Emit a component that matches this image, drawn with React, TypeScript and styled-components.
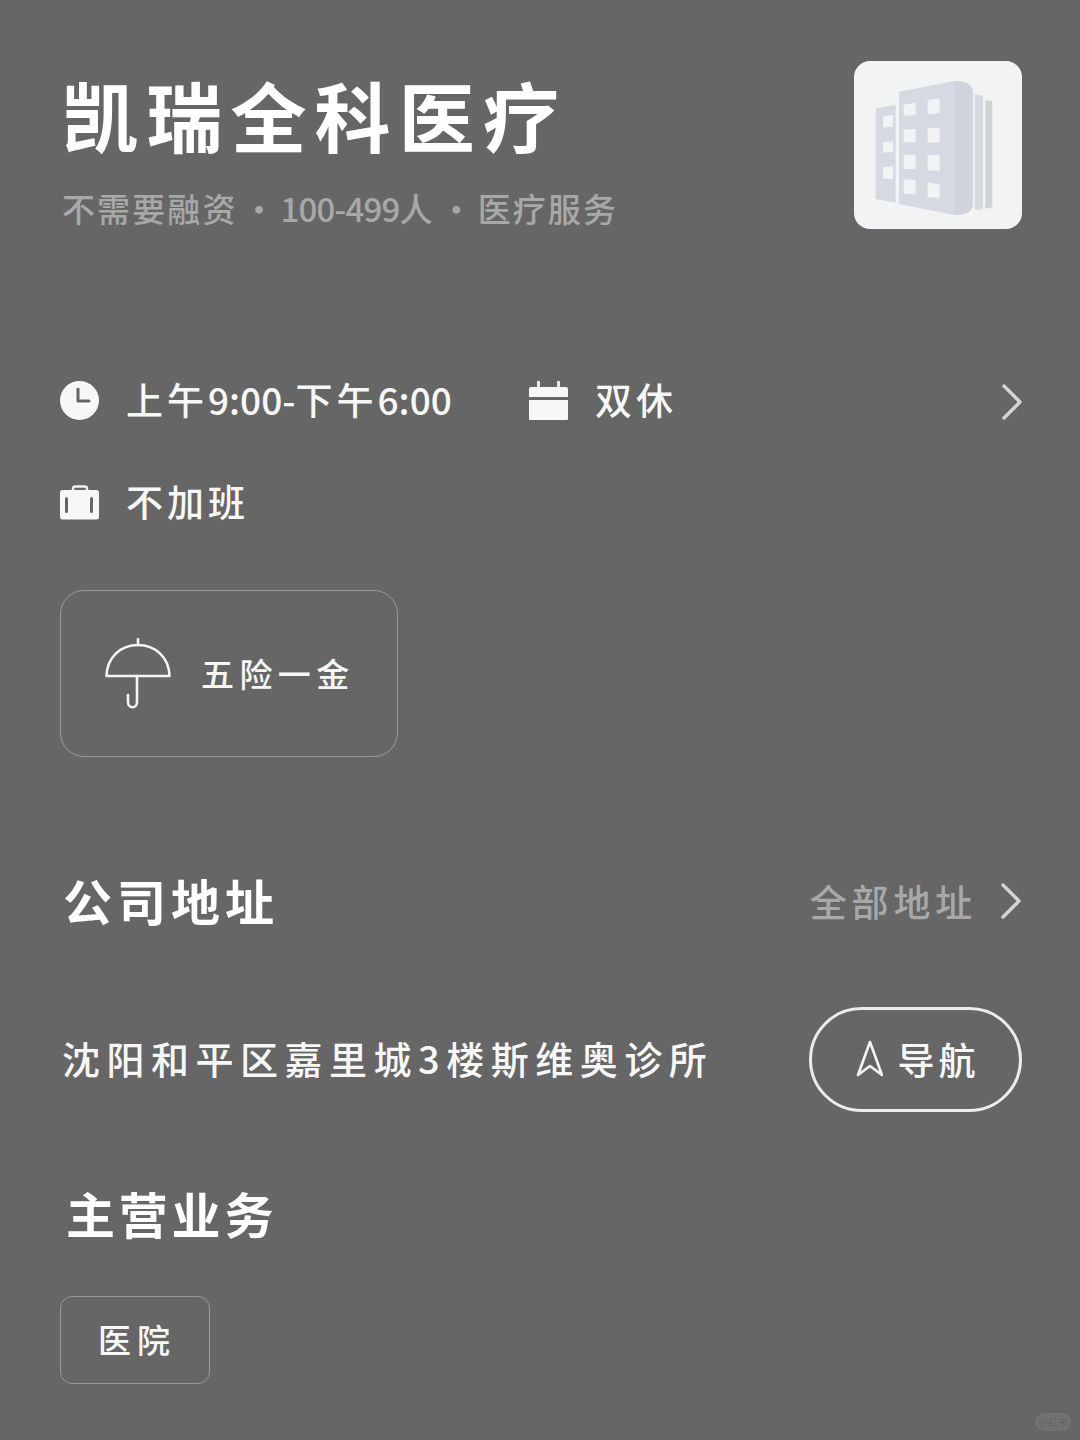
import React from 'react'
import styled, { createGlobalStyle } from 'styled-components'

const GlobalStyle = createGlobalStyle`
  html, body {
    margin: 0;
    padding: 0;
    background: #666666;
  }

  body {
    font-family: "Noto Sans CJK SC", "Noto Sans", sans-serif;
  }
`

const Page = styled.div`
  position: relative;
  box-sizing: border-box;
  width: 1080px;
  height: 1440px;
  padding: 61px 58px 0 60px;
  overflow: hidden;
  background: #666666;
  color: #f7f7f7;
`

const Header = styled.header`
  display: flex;
  justify-content: space-between;
  align-items: flex-start;
  height: 168px;
`

const Title = styled.h1`
  margin: -3px 0 0 2px;
  font-size: 76px;
  line-height: 112px;
  font-weight: 700;
  letter-spacing: 8.2px;
  color: #ffffff;
`

const Subtitle = styled.p`
  margin: 14px 0 0 2px;
  font-size: 33px;
  line-height: 48px;
  font-weight: 500;
  letter-spacing: 2.1px;
  color: #a8a8a8;
  white-space: nowrap;
`

const Dot = styled.span`
  margin: 0 5px;
  letter-spacing: 0;
`

const SubNum = styled.span`
  letter-spacing: -0.8px;
`

const LogoBox = styled.div`
  display: flex;
  width: 168px;
  height: 168px;
  border-radius: 16px;
  background: #f2f3f4;
`

const InfoRow = styled.div`
  display: flex;
  align-items: center;
  height: 48px;
  margin-top: ${({ $top }: { $top: number }) => $top}px;
`

const InfoItem = styled.div`
  display: flex;
  align-items: center;
  gap: 26px;
  width: ${({ $width }: { $width?: number }) => ($width ? `${$width}px` : 'auto')};
`

const InfoText = styled.span`
  margin-bottom: 4px;
  font-size: 37px;
  line-height: 48px;
  font-weight: 500;
  letter-spacing: 4px;
  white-space: nowrap;
`

const InfoNum = styled.span`
  letter-spacing: 0;
`

const Chevron = styled.div`
  display: flex;
  margin-top: 2px;
  margin-left: auto;
  margin-right: -1px;
`

const BenefitCard = styled.div`
  display: flex;
  align-items: center;
  gap: 30px;
  box-sizing: border-box;
  width: 338px;
  height: 167px;
  margin-top: 63px;
  padding-left: 44px;
  border: 1.5px solid #9a9a9a;
  border-radius: 24px;
`

const BenefitText = styled.span`
  margin-bottom: 2px;
  font-size: 33px;
  font-weight: 500;
  letter-spacing: 5.4px;
  white-space: nowrap;
`

const SectionHeader = styled.div`
  display: flex;
  align-items: center;
  justify-content: space-between;
  height: 64px;
  margin-top: 112px;
`

const SectionTitle = styled.h2`
  margin: 0 0 2px 3px;
  font-size: 49px;
  line-height: 64px;
  font-weight: 700;
  letter-spacing: 5px;
  color: #ffffff;
`

const AllLink = styled.div`
  display: flex;
  align-items: center;
  gap: 23px;
  font-size: 37px;
  font-weight: 500;
  letter-spacing: 4.8px;
  color: #a8a8a8;
`

const AddressRow = styled.div`
  display: flex;
  align-items: center;
  justify-content: space-between;
  margin-top: 74px;
`

const AddressText = styled.span`
  margin: 0 0 4px 2px;
  font-size: 38px;
  font-weight: 500;
  letter-spacing: 6.5px;
  white-space: nowrap;
`

const NavButton = styled.div`
  display: flex;
  align-items: center;
  justify-content: center;
  gap: 15px;
  box-sizing: border-box;
  width: 213px;
  height: 105px;
  padding: 0 0 2px 1px;
  border: 3px solid #ececec;
  border-radius: 53px;
  font-size: 37px;
  font-weight: 500;
  letter-spacing: 4px;
`

const BusinessTitle = styled(SectionTitle)`
  margin-top: 69px;
  margin-left: 6px;
  letter-spacing: 3.8px;
`

const Tag = styled.div`
  display: flex;
  align-items: center;
  justify-content: center;
  box-sizing: border-box;
  width: 150px;
  height: 88px;
  margin-top: 51px;
  padding: 0 0 2px 4px;
  border: 1.5px solid #9a9a9a;
  border-radius: 12px;
  font-size: 33px;
  font-weight: 500;
  letter-spacing: 6px;
`

const Watermark = styled.div`
  position: absolute;
  right: 9px;
  bottom: 9px;
  width: 36px;
  height: 18px;
  border-radius: 9px;
  background: #727272;
  color: #626262;
  font-size: 10px;
  line-height: 18px;
  text-align: center;
`

const ChevronIcon = () => (
  <svg width="22" height="36" viewBox="0 0 22 36" fill="none">
    <path d="M3 2 L19 18 L3 34" stroke="#d4d4d4" strokeWidth="3.4" strokeLinecap="round" strokeLinejoin="round" />
  </svg>
)

const ClockIcon = () => (
  <svg width="40" height="40" viewBox="0 0 40 40">
    <circle cx="19.5" cy="19.5" r="19.5" fill="#f7f7f7" />
    <path d="M18 8 V20 H29" fill="none" stroke="#666666" strokeWidth="3" strokeLinecap="round" strokeLinejoin="round" />
  </svg>
)

const CalendarIcon = () => (
  <svg width="40" height="40" viewBox="0 0 40 40">
    <rect x="8" y="0" width="3" height="7" fill="#e8e8e8" />
    <rect x="28" y="0" width="3" height="7" fill="#e8e8e8" />
    <path d="M0 8 Q0 6 2 6 H37 Q39 6 39 8 V16 H0 Z" fill="#f7f7f7" />
    <path d="M0 19 H39 V38 Q39 39 38 39 H1 Q0 39 0 38 Z" fill="#f7f7f7" />
  </svg>
)

const BriefcaseIcon = () => (
  <svg width="40" height="36" viewBox="0 0 40 36">
    <path d="M13 6 V3.5 Q13 1.5 15 1.5 H25 Q27 1.5 27 3.5 V6" fill="none" stroke="#f2f2f2" strokeWidth="2.4" />
    <rect x="0" y="5" width="39" height="29.5" rx="2.5" fill="#f7f7f7" />
    <rect x="5" y="12" width="3" height="16" rx="1.5" fill="#666666" />
    <rect x="30" y="12" width="3" height="16" rx="1.5" fill="#666666" />
  </svg>
)

const UmbrellaIcon = () => (
  <svg width="66" height="72" viewBox="0 0 66 72" fill="none" stroke="#f4f4f4" strokeWidth="2.6" strokeLinecap="round" strokeLinejoin="round">
    <path d="M33 1 V7" />
    <path d="M1.5 38 C2 19 16 7 33 7 C50 7 64 19 64.5 38 Z" />
    <path d="M32 38 V64 C32 71 23 71 23 64 V57" />
  </svg>
)

const NavigateIcon = () => (
  <svg width="30" height="38" viewBox="0 0 30 38" fill="none">
    <path d="M17 2 L29 35 L17 26 L5 35 Z" stroke="#f4f4f4" strokeWidth="2.6" strokeLinejoin="round" />
  </svg>
)

const BuildingIcon = () => (
  <svg width="168" height="168" viewBox="43 33 504 504">
    <path d="M108 175 L168 165 V458 L108 447 Z" fill="#d6d9e1" />
    <path d="M178 125 L345 93 Q400 93 400 130 V460 Q400 495 345 495 L178 462 Z" fill="#d6d9e1" />
    <path d="M345 93 Q400 93 400 130 V460 Q400 495 345 495 Z" fill="#d0d3dd" />
    <path d="M405 132 L430 137 V478 L405 480 Z" fill="#d8dae1" />
    <path d="M437 150 L458 153 V472 L437 476 Z" fill="#d0d2d7" />
    <g fill="#f2f3f4">
      <path d="M130 199 L160 195 V230 L130 233 Z" />
      <path d="M130 276 L160 274 V306 L130 308 Z" />
      <path d="M130 351 L160 349 V387 L130 386 Z" />
      <path d="M192 164 L228 158 V195 L192 198 Z" />
      <path d="M264 150 L300 144 V190 L264 193 Z" />
      <path d="M192 239 L228 237 V276 L192 277 Z" />
      <path d="M264 235 L300 233 V277 L264 278 Z" />
      <path d="M192 315 L228 313 V356 L192 357 Z" />
      <path d="M264 315 L300 314 V362 L264 361 Z" />
      <path d="M192 388 L228 391 V433 L192 431 Z" />
      <path d="M264 398 L300 402 V444 L264 441 Z" />
    </g>
  </svg>
)

function App() {
  return (
    <Page>
      <GlobalStyle />
      <Header>
        <div>
          <Title>凯瑞全科医疗</Title>
          <Subtitle>
            不需要融资<Dot>·</Dot>
            <SubNum>100-499</SubNum>人<Dot>·</Dot>医疗服务
          </Subtitle>
        </div>
        <LogoBox>
          <BuildingIcon />
        </LogoBox>
      </Header>

      <InfoRow $top={148}>
        <InfoItem $width={469}>
          <ClockIcon />
          <InfoText>
            上午<InfoNum>9:00-</InfoNum>下午<InfoNum>6:00</InfoNum>
          </InfoText>
        </InfoItem>
        <InfoItem>
          <CalendarIcon />
          <InfoText>双休</InfoText>
        </InfoItem>
        <Chevron>
          <ChevronIcon />
        </Chevron>
      </InfoRow>

      <InfoRow $top={54}>
        <InfoItem>
          <BriefcaseIcon />
          <InfoText>不加班</InfoText>
        </InfoItem>
      </InfoRow>

      <BenefitCard>
        <UmbrellaIcon />
        <BenefitText>五险一金</BenefitText>
      </BenefitCard>

      <SectionHeader>
        <SectionTitle>公司地址</SectionTitle>
        <AllLink>
          全部地址
          <ChevronIcon />
        </AllLink>
      </SectionHeader>

      <AddressRow>
        <AddressText>沈阳和平区嘉里城3楼斯维奥诊所</AddressText>
        <NavButton>
          <NavigateIcon />
          导航
        </NavButton>
      </AddressRow>

      <BusinessTitle>主营业务</BusinessTitle>
      <Tag>医院</Tag>

      <Watermark>小红书</Watermark>
    </Page>
  )
}

export default App
